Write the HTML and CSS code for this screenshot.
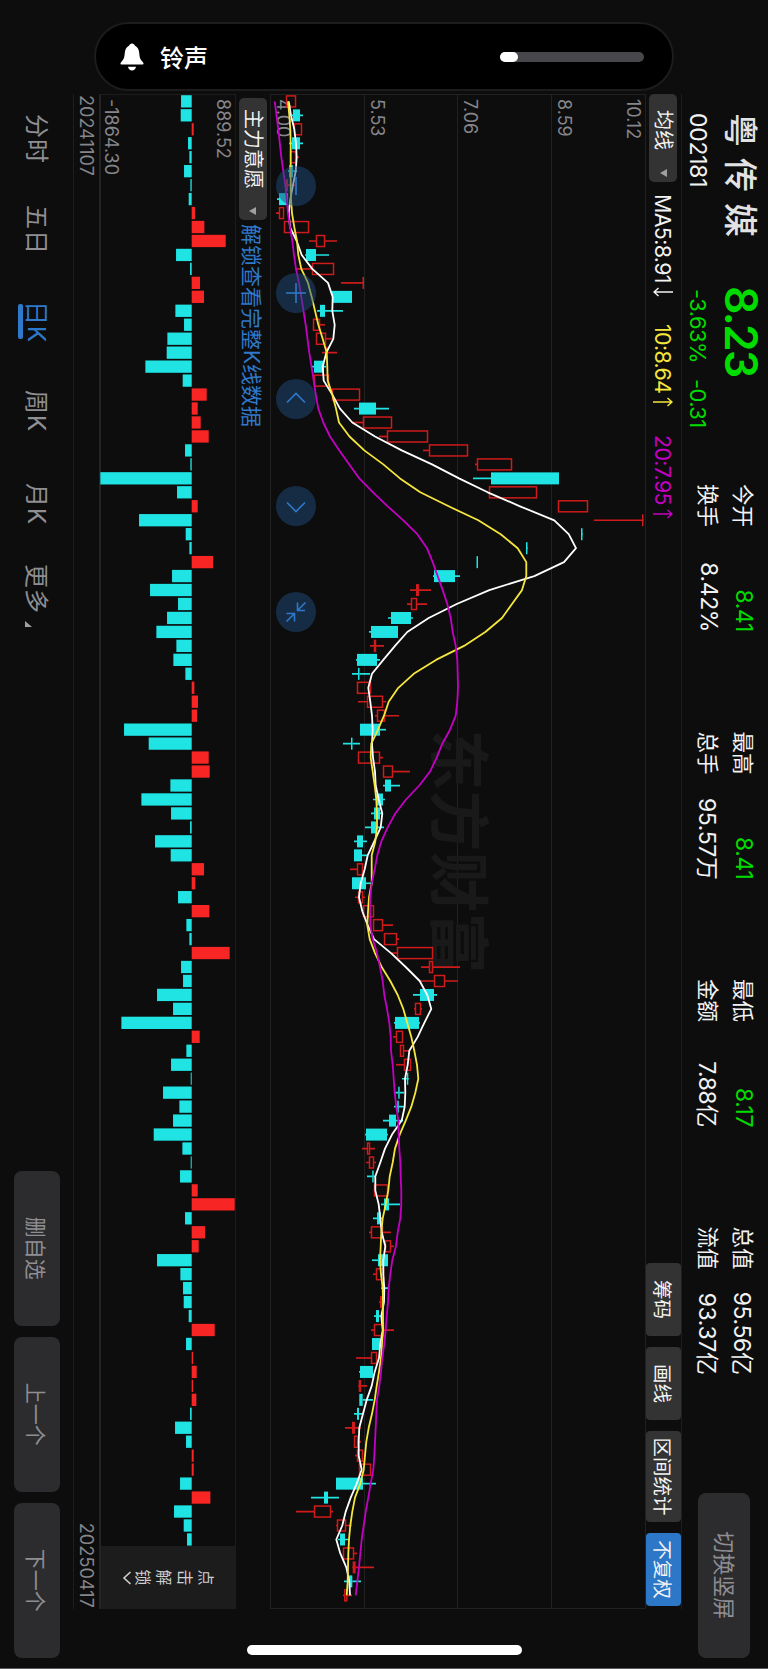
FILE: index.html
```html
<!DOCTYPE html>
<html lang="zh-CN">
<head>
    <meta charset="UTF-8">
    <meta name="viewport" content="width=device-width, initial-scale=1.0">
    <title>粤传媒 002181</title>
    <link rel="stylesheet" href="styles.css">
</head>
<body>
    <div class="screen">
        <main class="landscape">
            <header class="header">
                <div class="stock">
                    <h1 class="stock-name">粤传媒</h1>
                    <div class="stock-code">002181</div>
                </div>
                <div class="quote">
                    <div class="price">8.23</div>
                    <div class="change"><span>-3.63%</span><span>-0.31</span></div>
                </div>
                <div class="stats">
                    <div class="stat"><span>今开</span><span class="value down">8.41</span></div>
                    <div class="stat"><span>最高</span><span class="value down">8.41</span></div>
                    <div class="stat"><span>最低</span><span class="value down">8.17</span></div>
                    <div class="stat"><span>总值</span><span class="value">95.56亿</span></div>
                    <div class="stat"><span>换手</span><span class="value">8.42%</span></div>
                    <div class="stat"><span>总手</span><span class="value">95.57万</span></div>
                    <div class="stat"><span>金额</span><span class="value">7.88亿</span></div>
                    <div class="stat"><span>流值</span><span class="value">93.37亿</span></div>
                </div>
                <button class="gray-button rotate-button">切换竖屏</button>
            </header>

            <section class="workspace">
                <div class="legend">
                    <button class="picker picker-ma">均线<i class="caret"></i></button>
                    <span class="ma ma5">MA5:8.91<svg width="12" height="20" viewBox="0 0 12 20"><path d="M6 0V19M2 14.5L6 19L10 14.5"/></svg></span>
                    <span class="ma ma10">10:8.64<svg width="12" height="20" viewBox="0 0 12 20"><path d="M6 20V1M2 5.5L6 1L10 5.5"/></svg></span>
                    <span class="ma ma20">20:7.95<svg width="12" height="20" viewBox="0 0 12 20"><path d="M6 20V1M2 5.5L6 1L10 5.5"/></svg></span>
                    <div class="tools">
                        <button class="tool">筹码</button>
                        <button class="tool">画线</button>
                        <button class="tool tool-wide">区间统计</button>
                        <button class="tool tool-active">不复权</button>
                    </div>
                </div>

                <div class="kline">
                    <div class="grid-row"><span>10.12</span><span>8.59</span></div>
                    <div class="grid-row"><span>7.06</span></div>
                    <div class="grid-row"><span>5.53</span></div>
                    <div class="grid-row"><span>4.00</span></div>
                    <div class="watermark">东方财富</div>
                    <svg class="plot" id="kline" width="1515" height="376"></svg>
                    <div class="controls">
                        <button class="round"><svg viewBox="0 0 40 40"><path d="M11 20H29"/></svg></button>
                        <button class="round"><svg viewBox="0 0 40 40"><path d="M10 20H30M20 10V30"/></svg></button>
                        <button class="round"><svg viewBox="0 0 40 40"><path d="M23.5 11L14.5 20L23.5 29"/></svg></button>
                        <button class="round"><svg viewBox="0 0 40 40"><path d="M16.5 11L25.5 20L16.5 29"/></svg></button>
                        <button class="round"><svg viewBox="0 0 40 40"><path d="M10.500 10.500L18.500 18.500M18.500 11V18.500H10.500M29.500 29.500L21.500 21.500M29.500 21.500H21.500V29.500"/></svg></button>
                    </div>
                </div>

                <div class="sub-head">
                    <button class="picker picker-sub">主力意愿<i class="caret"></i></button>
                    <span class="unlock-link">解锁查看完整K线数据</span>
                </div>

                <div class="sub-chart">
                    <span class="sub-label">889.52</span>
                    <span class="sub-label">-1864.30</span>
                    <svg class="plot" id="flow" width="1515" height="137"></svg>
                    <div class="locked">
                        <span>点</span><span>击</span><span>解</span><span>锁</span>
                        <svg width="16" height="10" viewBox="0 0 16 10"><path d="M2 1.500L8 8L14 1.500"/></svg>
                    </div>
                </div>

                <div class="dates"><span>20241107</span><span>20250417</span></div>
            </section>

            <footer class="footer">
                <nav class="tabs">
                    <a>分时</a>
                    <a>五日</a>
                    <a class="active">日K</a>
                    <a>周K</a>
                    <a>月K</a>
                    <a>更多<i class="corner"></i></a>
                </nav>
                <div class="actions">
                    <button class="gray-button">删自选</button>
                    <button class="gray-button">上一个</button>
                    <button class="gray-button">下一个</button>
                </div>
            </footer>
        </main>

        <div class="ring-banner">
            <svg class="bell" width="24" height="28" viewBox="0 0 24 28"><path d="M12 0.500C13.500 0.500 14.500 1.500 14.800 2.500C18 4 19 7 19.300 10.500C19.600 15 20.500 16.500 22.300 18.500C24 20.500 24 21.500 22.500 21.500H1.500C0 21.500 0 20.500 1.700 18.500C3.500 16.500 4.400 15 4.700 10.500C5 7 6 4 9.200 2.500C9.500 1.500 10.500 0.500 12 0.500ZM8 23.700H16C15.700 26 14 27.500 12 27.500C10 27.500 8.300 26 8 23.700Z"/></svg>
            <span>铃声</span>
            <div class="volume"><div class="volume-level"></div></div>
        </div>
        <div class="home-indicator"></div>
    </div>
    <script src="chart.js"></script>
</body>
</html>
```
FILE: styles.css
```css
* {
    box-sizing: border-box;
}
body {
    margin: 0;
    background-color: #0d0d0d;
    font-family: Inter, "Noto Sans CJK SC", sans-serif;
    color: #f2f2f2;
}
button {
    margin: 0;
    padding: 0;
    border: none;
    font-family: inherit;
    color: inherit;
    white-space: nowrap;
}
.screen {
    position: relative;
    width: 768px;
    height: 1669px;
    overflow: hidden;
    border-bottom: 1px solid #5a5a5c;
}
/* The whole app is laid out in landscape and turned a quarter clockwise */
.landscape {
    width: 1669px;
    height: 768px;
    display: flex;
    flex-direction: column;
    transform-origin: 0 0;
    transform: translateX(768px) rotate(90deg);
}

/* Header */
.header {
    display: flex;
    height: 86px;
    padding-left: 113px;
    padding-right: 11px;
}
.stock {
    width: 173px;
}
.stock-name {
    margin: 0;
    padding-top: 6px;
    font-size: 34px;
    line-height: 44px;
    font-weight: 500;
    letter-spacing: 11px;
    color: #e2e2e2;
}
.stock-code {
    padding-top: 5px;
    font-size: 23px;
    line-height: 30px;
    letter-spacing: -0.3px;
}
.quote {
    width: 198px;
    color: #00dc00;
}
.price {
    padding-top: 5px;
    font-size: 44.5px;
    line-height: 44px;
    font-weight: 600;
    letter-spacing: -1.8px;
}
.change {
    display: flex;
    gap: 16px;
    padding: 6px 0 0 3px;
    font-size: 22px;
    line-height: 30px;
    letter-spacing: -0.6px;
}
.stats {
    display: grid;
    grid-template-columns: repeat(4, 148px);
    grid-template-rows: 35px 35px;
    column-gap: 99.500px;
    padding-top: 6px;
}
.stat {
    display: flex;
    justify-content: space-between;
    align-items: center;
    font-size: 21.5px;
}
.value {
    font-size: 23px;
    letter-spacing: -0.4px;
}
.down {
    color: #00dc00;
}
.gray-button {
    background-color: #2c2c2e;
    color: #8e8e93;
    border-radius: 8px;
    font-size: 21px;
}
.rotate-button {
    width: 165.500px;
    height: 52px;
    margin-top: 18px;
    margin-left: auto;
    padding-bottom: 4px;
    font-size: 22px;
}

/* Charts */
.workspace {
    width: 1515px;
    margin-left: 94px;
    border-top: 1px solid #1e1e1e;
}
.legend {
    display: flex;
    align-items: center;
    height: 35px;
}
.picker {
    display: flex;
    align-items: center;
    justify-content: space-between;
    height: 28px;
    border-radius: 5px;
    background-color: #333;
    font-size: 20px;
    line-height: 28px;
}
.picker-ma {
    width: 88px;
    padding: 0 5px 0 16px;
}
.picker-sub {
    width: 122px;
    padding: 0 5px 0 11px;
}
.caret {
    border: 4px solid transparent;
    border-top: 7px solid #a0a0a0;
    border-bottom: 0;
}
.ma {
    display: flex;
    align-items: center;
    gap: 3px;
    font-size: 21.5px;
    letter-spacing: -0.7px;
}
.ma svg {
    fill: none;
    stroke: currentColor;
    stroke-width: 1.5;
}
.ma5 {
    width: 130px;
    margin-left: 12px;
}
.ma10 {
    width: 111px;
    color: #f5e63c;
}
.ma20 {
    color: #c400c4;
}
.tools {
    display: flex;
    gap: 11px;
    margin-left: auto;
    margin-right: 3px;
}
.tool {
    width: 73px;
    height: 35px;
    padding-bottom: 1px;
    border-radius: 4px;
    background-color: #333;
    font-size: 19.500px;
}
.tool-wide {
    width: 91px;
}
.tool-active {
    background-color: #2d77c8;
}
.kline {
    position: relative;
    height: 376px;
    border: 1px solid #212121;
    display: flex;
    flex-direction: column;
}
.grid-row {
    flex: 1;
    display: flex;
    flex-direction: column;
    border-bottom: 1px solid #212121;
    padding: 3px 4px 0;
    font-size: 18px;
    line-height: 18px;
    color: #85858a;
}
.grid-row:nth-child(4) {
    border-bottom: none;
}
.grid-row span:last-child {
    margin-top: auto;
    margin-bottom: 3px;
}
.watermark {
    position: absolute;
    inset: 0;
    display: flex;
    align-items: center;
    justify-content: center;
    padding-bottom: 10px;
    font-size: 61px;
    font-weight: 700;
    color: #191919;
}
.plot {
    position: absolute;
    left: -1px;
    top: 0;
    fill: none;
}
.kline .plot {
    top: -1px;
}
.controls {
    position: absolute;
    left: 71px;
    bottom: 5px;
    display: flex;
    gap: 66.600px;
}
.round {
    width: 40px;
    height: 40px;
    border-radius: 50%;
    background-color: rgba(32, 76, 126, 0.5);
}
.round svg {
    display: block;
    fill: none;
    stroke: #2f79cb;
    stroke-width: 1.6;
}
.sub-head {
    display: flex;
    align-items: center;
    height: 34px;
    padding-left: 4px;
    gap: 4px;
}
.unlock-link {
    font-size: 21px;
    color: #2f79cb;
}
.sub-chart {
    position: relative;
    height: 137px;
    border-top: 1px solid #1c1c1c;
    border-left: 1px solid #1c1c1c;
    border-bottom: 2px solid #242424;
    padding: 3px 4px 1px;
    display: flex;
    flex-direction: column;
    justify-content: space-between;
}
.sub-label,
.dates {
    font-size: 18px;
    line-height: 18px;
    color: #85858a;
}
.locked {
    position: absolute;
    right: 0;
    top: 0;
    width: 63px;
    height: 134px;
    display: flex;
    flex-direction: column;
    align-items: center;
    padding-top: 19px;
    background-color: #1c1c1c;
    color: #cfcfcf;
    font-size: 16px;
    line-height: 21px;
}
.locked svg {
    fill: none;
    stroke: #cfcfcf;
    stroke-width: 1.6;
}
.dates {
    display: flex;
    justify-content: space-between;
    height: 26px;
    padding: 4px 1px;
    letter-spacing: 0.1px;
    border-bottom: 1px solid #1e1e1e;
}

/* Footer */
.footer {
    display: flex;
    justify-content: space-between;
    padding: 13px 11px 0 114px;
}
.tabs {
    display: flex;
    font-size: 24px;
    line-height: 34px;
    color: #8e8e93;
}
.tabs a {
    position: relative;
    height: 34px;
    width: 93px;
    padding-top: 7px;
    letter-spacing: 1px;
    white-space: nowrap;
}
.tabs a:nth-child(1) {
    width: 91px;
}
.tabs a:nth-child(2) {
    width: 96px;
}
.tabs a:nth-child(3) {
    width: 89px;
}
.tabs a:nth-child(5) {
    width: 81px;
}
.tabs .active {
    color: #2f79cb;
}
.active::after {
    content: "";
    position: absolute;
    left: 3px;
    top: 37px;
    width: 35px;
    height: 5px;
    border-radius: 2px;
    background-color: #2f79cb;
}
.corner {
    display: inline-block;
    margin-left: 7px;
    border-left: 6px solid transparent;
    border-bottom: 7px solid #a0a0a0;
    vertical-align: -3px;
}
.actions {
    display: flex;
    gap: 10.500px;
}
.actions .gray-button {
    width: 155.500px;
    height: 46px;
}

/* System overlays */
.ring-banner {
    position: absolute;
    left: 94px;
    top: 22px;
    width: 580px;
    height: 69px;
    display: flex;
    align-items: center;
    padding: 0 28px 0 24px;
    border: 2px solid #1c1c1d;
    border-radius: 35px;
    background-color: #000;
    color: #fff;
    font-size: 24px;
    font-weight: 500;
}
.bell {
    margin-right: 16px;
    fill: #fff;
}
.volume {
    width: 144px;
    height: 10px;
    margin-left: auto;
    border-radius: 5px;
    background-color: #48484c;
}
.volume-level {
    width: 18px;
    height: 10px;
    border-radius: 5px;
    background-color: #fff;
}
.home-indicator {
    position: absolute;
    left: 247px;
    top: 1645px;
    width: 275px;
    height: 10px;
    border-radius: 5px;
    background-color: #fff;
}
```
FILE: chart.js
```javascript
const RED = '#cf1b1b';
const CYAN = '#20e3e3';
const STEP = 13.962;
const FIRST = 7.4;
const BAR = 12;

// Levels are heights above the bottom of the landscape screen
const KLINE_TOP = 646;
const FLOW_ZERO = 43.3;

// kind (r = up, R = up and filled, c = down), low, body bottom, body top, high
const candles = `
r 286 286 296 296|c 292 293 300 303|r 294 294 302 302|c 289 292 300 303|r 290 290 296 299|c 288 289 293 297
R 286 286 288 295|c 277 279 288 288|r 276 279 284 284|r 284 284 309 309|r 309 316 325 337|c 305 306 316 329
r 295 312 334 334|R 341 363 364 364|c 332 332 352 352|c 317 320 325 343|r 313 313 320 325|r 316 316 326 332
R 322 326.5 327.5 337|c 311 314 324 326|r 314 314 329 329|r 332 332 360 360|c 354 359 376 389|r 352 363 392 392
r 379 387 428 428|r 423 429 468 468|r 475 477 512 512|c 473 491 559 559|r 489 489 537 537|r 558 558 588 588
R 594 642.5 643.500 643|c 582 581.5 582.5 582|c 527 526.5 527.5 527|c 477 477 478 478|c 433 434 455 460|R 410 416 419 431
r 407 411 417 427|c 388 391 411 413|c 369 371 398 398|r 370 374 376 384|c 356 357 377 380|c 352 358.5 359.5 370
r 357 357 371 371|r 358 367 383 386|r 375 377 385 399|c 360 360 380 386|c 343 351.5 352.5 360|r 358 358 380 383
r 383 383 393 410|c 383 385 391 400|c 373 376 383 385|c 371 374 380 382|c 365 371 376 384|c 354 357 363 367
c 354 354 362 367|r 350 357 363 363|c 352 352 366 373|r 355 358 363 365|r 363 363 374 374|r 373 373 383 393
r 384 384 397 399|r 392 397 433 433|r 421 429 433 460|r 419 434 445 458|c 413 420 434 437|r 414 415 421 422
c 394 395 419 420|r 393 396 403 403|r 400 400 404 409|r 396 404 411 411|c 402 407 408.3 409|c 394 398.3 399.7 404
c 394 397.6 398.8 404|c 383 389 396 403|c 365 366 387 388|r 362 367 370 375|r 366 369 374 376|c 367 372.3 373.7 375
r 374 374 388 388|c 381 384 389 400|c 373 377 381 382|r 369 371 383 391|r 385 385 391 394|c 372 378 388 388
r 373 376 384 384|c 381 382.7 384 388|R 379 380 382.3 384|c 374 376 379 381|r 371 374 384 394|c 372 372 380 380
r 356 371 377 377|c 359 360 373 373|R 358 358.7 361.3 367|c 359 359.3 362.7 373|c 354 357 359 363|R 345 352 355 361
r 354 354 358 361|r 355 357 363 363|r 359 359 371 371|c 336 336 363 376|c 311 324 328 339|r 296 314 331 333
r 336 337 346 352|c 338 340 345 349|r 343 343 354 357|R 352 352.7 355.7 374|c 344 349 352.3 361|r 343 344.3 347.3 352`
    .trim().split(/[|\n]/);

const ma5 = [288.7, 291, 294.3, 296, 296.7, 295.7, 293, 290.3, 288.7, 290, 296.7, 301.7, 312.3, 328, 332.7, 332.3, 334.7, 333.3,
    326.3, 322.7, 323.7, 332.3, 340, 352.3, 375, 401.7, 432, 459, 487.7, 520, 554.3, 568.7, 576, 564, 534.3, 489.3, 456.7, 428.7,
    407.3, 395, 383.3, 372, 368.3, 370.3, 372, 372.7, 372, 373, 375, 375.7, 378.7, 382.3, 380.7, 374.3, 367.7, 364.7, 360.7, 359,
    362.3, 367.7, 374, 391, 405.7, 419.7, 427.3, 431.3, 424.3, 417.7, 409.3, 407.7, 405, 405.3, 404.7, 401.7, 392, 385, 380.3,
    375.3, 375.3, 378.7, 380.3, 381.7, 385.3, 383.3, 383.3, 384.3, 384, 381.3, 382.7, 380.3, 379, 374.7, 371.7, 366.7, 363, 359.3,
    358.7, 358.7, 361.7, 356.7, 350.7, 345.7, 342.3, 336.3, 340.3, 346.3, 349.3, 350];

const ma10 = [288, 289.3, 290.3, 290.7, 290.7, 290.7, 290.7, 291, 292, 294.3, 297, 298.3, 301.3, 308, 311.7, 315, 318.3, 322.7,
    326.7, 327.3, 327.7, 332.3, 336, 339, 349.5, 364.3, 383.3, 400, 420.3, 448.7, 478.3, 500.7, 517.7, 526.3, 526.3, 522, 512, 502,
    485.3, 464, 436, 413.7, 398.3, 388.7, 384, 378, 371.3, 370.7, 372.7, 374.7, 376.3, 377, 377, 375.3, 371.7, 371.7, 371.7, 369,
    368, 367.3, 369.7, 375, 381.7, 390.3, 397.7, 403.3, 407.3, 411.3, 414.3, 417, 418.3, 415.3, 411.3, 405.7, 399.7, 395, 392.7,
    389.7, 388.3, 385.7, 382.7, 381.3, 380.7, 380, 381, 382.7, 383, 383, 383, 382, 381, 379, 376.7, 374.7, 372, 368.7, 366.3, 365,
    363.7, 360.3, 355, 352.3, 350.3, 349, 348.3, 348, 347.7, 346.7];

const ma20 = [274.7, 276.5, 278.3, 279.8, 281.3, 283.3, 285.3, 286.7, 288, 290, 292.3, 294, 296, 299, 301.3, 303.5, 305.7, 307.5,
    309.3, 311.5, 313.7, 315.8, 318.3, 323.3, 330, 339.3, 349.3, 359.3, 373, 387.7, 403.3, 417.3, 427, 432.7, 437.7, 442.7, 447.3,
    450.7, 452.7, 455.7, 457.3, 457.7, 458, 457.3, 455.7, 450, 442.3, 436.7, 430, 419.3, 406, 395.3, 387.7, 381.3, 377.3, 374.7,
    371.7, 370.3, 370, 370.3, 372.7, 377, 380, 382.7, 384.3, 387, 389.3, 390.7, 391, 392.7, 393.7, 394.7, 396.3, 398.3, 398.7,
    399.3, 400.3, 400.7, 401.3, 401.3, 400.3, 397.7, 396, 392.3, 390.3, 388.7, 388, 386.7, 385.7, 384.3, 382.3, 381, 379.3, 377,
    376.3, 375.7, 375, 374.3, 373.3, 370.7, 368.3, 365.7, 363.7, 361.7, 360.3, 359, 357.3, 355.7];

// Main force flow, in thirds of a pixel
const flow = [-32, -33, 6, -11, -7, -23, -4, -9, 10, 38, 102, -47, -5, 25, 37, -49, -23, -73, -75, -139, -27, 45, 18, 27, 51, -20,
    -4, -274, -44, 18, -158, -18, -7, 64, -59, -125, -41, -74, -106, -46, -55, -19, 8, 19, 16, -203, -129, 51, 54, -64, -151, -62,
    -5, -110, -63, 37, 11, -41, 53, -16, -7, 114, -32, -26, -104, -56, -211, 24, -16, -62, -3, -86, -37, -56, -114, -28, -3, -35,
    18, 129, -20, 40, 21, -104, -34, -26, -24, -9, 69, -17, 4, 15, 4, 14, -5, -50, -17, 6, 6, -35, 56, -53, -24, -14];

const x = i => FIRST + i * STEP;
const y = level => KLINE_TOP - level;

const drawCandle = (row, i) => {
    const [kind, ...levels] = row.split(' ');
    const [low, bottom, top, high] = levels.map(Number);
    const color = kind === 'c' ? CYAN : RED;
    const wicks = `<path d="M${x(i)} ${y(high)}V${y(top)}M${x(i)} ${y(bottom)}V${y(low)}" stroke="${color}" stroke-width="1.7"/>`;
    if (kind === 'r') {
        return wicks + `<rect x="${x(i) - 5.5}" y="${y(top) + 0.5}" width="11" height="${Math.max(top - bottom - 1, 1)}" stroke="${color}" stroke-width="1.5"/>`;
    }
    return wicks + `<rect x="${x(i) - BAR / 2}" y="${y(top)}" width="${BAR}" height="${Math.max(top - bottom, 1.5)}" fill="${color}"/>`;
};

const drawLine = (values, color) => {
    const points = values.map((v, i) => `${x(i).toFixed(1)},${y(v).toFixed(1)}`).join(' ');
    return `<polyline points="${points}" stroke="${color}" stroke-width="1.8" stroke-linejoin="round"/>`;
};

document.getElementById('kline').innerHTML =
    candles.map(drawCandle).join('') +
    drawLine(ma5, '#ffffff') +
    drawLine(ma10, '#f5e63c') +
    drawLine(ma20, '#c400c4');

document.getElementById('flow').innerHTML = flow.map((v, i) => {
    const size = Math.abs(v) / 3;
    const top = v > 0 ? FLOW_ZERO - size : FLOW_ZERO;
    return `<rect x="${x(i) - 6.2}" y="${top}" width="12.3" height="${size}" fill="${v > 0 ? '#f82525' : CYAN}"/>`;
}).join('');
```
